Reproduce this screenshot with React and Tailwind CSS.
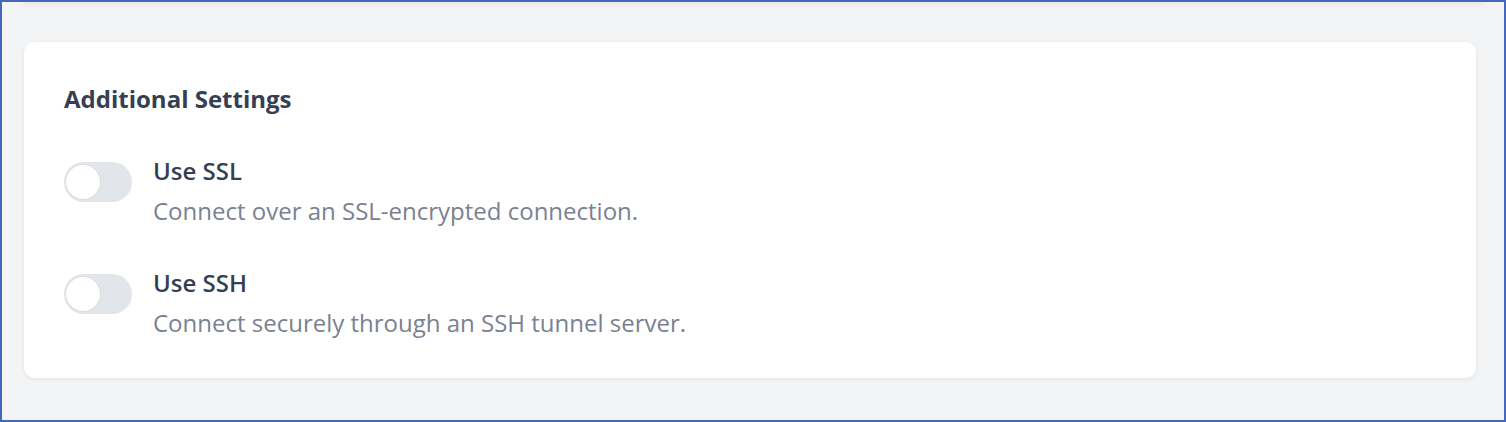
import React, { useState } from "react";

const SETTINGS = [
  { id: "ssl", label: "Use SSL", help: "Connect over an SSL-encrypted connection." },
  { id: "ssh", label: "Use SSH", help: "Connect securely through an SSH tunnel server." },
];

const Toggle = ({ on, onChange }) => (
  <button
    type="button"
    onClick={onChange}
    className={`relative shrink-0 w-[68px] h-10 rounded-full transition-colors ${
      on ? "bg-[#4a6bc0]" : "bg-[#e2e5ea]"
    }`}
  >
    <span
      className={`absolute top-[3px] left-[2px] w-[34px] h-[34px] rounded-full bg-white shadow-[0_0_0_1px_rgba(0,0,0,0.04)] transition-transform ${
        on ? "translate-x-[30px]" : "translate-x-0"
      }`}
    />
  </button>
);

const App = () => {
  const [values, setValues] = useState({ ssl: false, ssh: false });

  return (
    <div
      className="w-[1506px] h-[422px] overflow-hidden bg-[#f3f4f6] border-2 border-[#4466bb]"
      style={{ fontFamily: '"Open Sans", sans-serif' }}
    >
      {/* bottom edge of the card above, only its shadow shows */}
      <div className="mx-5 -mt-3 h-3 bg-white shadow-[0_2px_6px_rgba(0,0,0,0.06)]" />

      <div className="ml-[22px] mr-[28px] mt-[40px] bg-white rounded-[10px] shadow-[0_1px_4px_rgba(0,0,0,0.08)] px-10 pt-[41px] pb-[39px]">
        <h2 className="text-[24px] leading-8 font-bold text-[#363f52]">Additional Settings</h2>

        <div className="mt-[47px] flex flex-col gap-[47px]">
          {SETTINGS.map((s) => (
            <div key={s.id} className="flex items-start gap-[21px]">
              <Toggle
                on={values[s.id]}
                onChange={() => setValues((v) => ({ ...v, [s.id]: !v[s.id] }))}
              />
              <div className="-mt-[7px]">
                <div className="text-[24px] leading-8 font-semibold text-[#363f52]">{s.label}</div>
                <div className="mt-[8px] text-[24px] leading-8 text-[#7b8191]">{s.help}</div>
              </div>
            </div>
          ))}
        </div>
      </div>
    </div>
  );
};

export default App;
